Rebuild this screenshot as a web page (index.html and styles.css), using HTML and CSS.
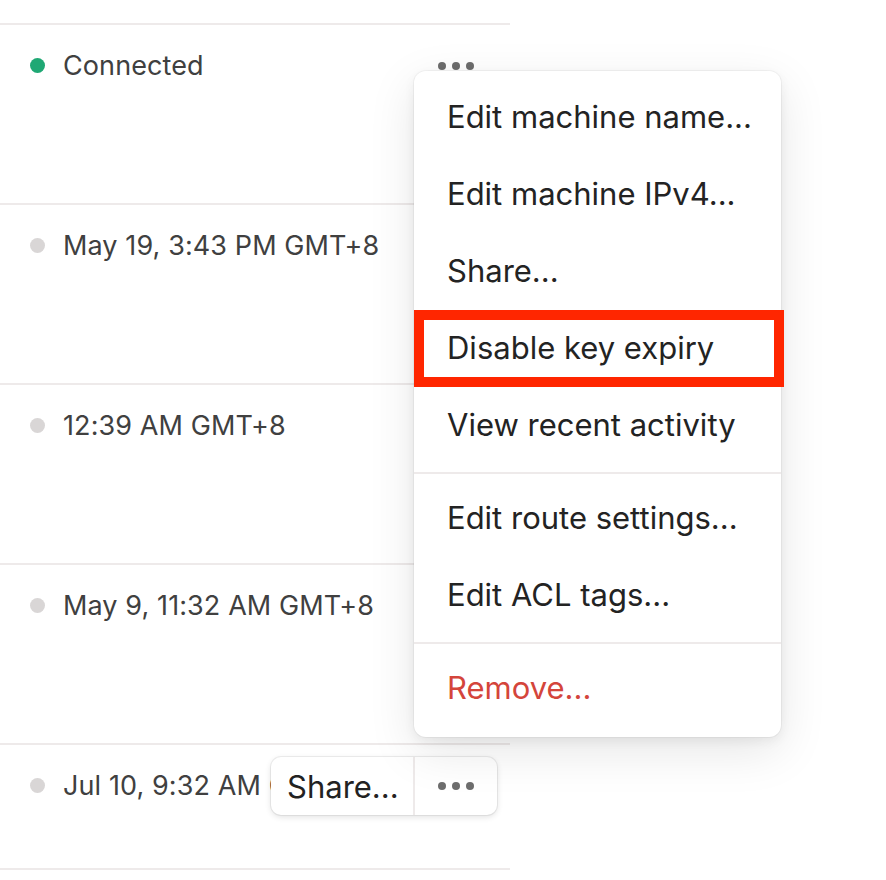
FILE: index.html
```html
<!DOCTYPE html>
<html lang="en">
<head>
<meta charset="utf-8">
<title>Machines</title>
<link rel="stylesheet" href="styles.css">
</head>
<body>
  <div class="list">
    <div class="row">
      <div class="status"><span class="dot dot-on"></span><span class="status-text">Connected</span></div>
      <div class="actions plain">
        <button class="more" aria-label="More"><span></span><span></span><span></span></button>
      </div>
    </div>
    <div class="row">
      <div class="status"><span class="dot"></span><span class="status-text">May 19, 3:43 PM GMT+8</span></div>
    </div>
    <div class="row">
      <div class="status"><span class="dot"></span><span class="status-text">12:39 AM GMT+8</span></div>
    </div>
    <div class="row">
      <div class="status"><span class="dot"></span><span class="status-text">May 9, 11:32 AM GMT+8</span></div>
    </div>
    <div class="row row-last">
      <div class="status"><span class="dot"></span><span class="status-text">Jul 10, 9:32 AM GMT+8</span></div>
      <div class="actions group">
        <button class="share">Share...</button>
        <button class="more" aria-label="More"><span></span><span></span><span></span></button>
      </div>
    </div>
  </div>

  <div class="menu" role="menu">
    <div class="menu-item">Edit machine name...</div>
    <div class="menu-item">Edit machine IPv4...</div>
    <div class="menu-item">Share...</div>
    <div class="menu-item highlighted">Disable key expiry<span class="callout"></span></div>
    <div class="menu-item">View recent activity</div>
    <div class="menu-sep"></div>
    <div class="menu-item">Edit route settings...</div>
    <div class="menu-item">Edit ACL tags...</div>
    <div class="menu-sep"></div>
    <div class="menu-item danger">Remove...</div>
  </div>
</body>
</html>
```

FILE: styles.css
```css
html, body {
  margin: 0;
  padding: 0;
  background: #ffffff;
}

body {
  font-family: Inter, "Noto Sans", "Liberation Sans", sans-serif;
  width: 886px;
  height: 880px;
  overflow: hidden;
  position: relative;
}

.list {
  width: 510px;
  margin-top: 23px;
  border-top: 2px solid #eeeaea;
}

.row {
  position: relative;
  height: 158px;
  padding-top: 20px;
  border-bottom: 2px solid #eeeaea;
  box-sizing: content-box;
}

.row-last {
  height: 103px;
}

.status {
  display: flex;
  align-items: center;
  height: 40px;
  padding-left: 30px;
}

.dot {
  width: 15px;
  height: 15px;
  border-radius: 50%;
  background: #d9d6d6;
  flex: none;
}

.dot-on {
  background: #1fa874;
}

.status-text {
  margin-left: 18px;
  font-size: 27px;
  color: #404040;
  white-space: nowrap;
  letter-spacing: 0.1px;
}

.actions {
  position: absolute;
  right: 13px;
  top: 12px;
  height: 58px;
  display: flex;
}

.actions button {
  border: 0;
  background: transparent;
  padding: 0;
  margin: 0;
  font-family: inherit;
  height: 58px;
}

.group {
  background: #ffffff;
  border-radius: 10px;
  box-shadow: 0 0 0 1px rgba(0, 0, 0, 0.06), 0 2px 6px rgba(0, 0, 0, 0.12);
}

.actions .share {
  width: 144px;
  padding-left: 16px;
  text-align: left;
  font-size: 31px;
  color: #222222;
  border-right: 2px solid #eeeaea;
  box-sizing: border-box;
}

.more {
  width: 82px;
  display: flex;
  align-items: center;
  justify-content: center;
  gap: 6px;
}

.more span {
  width: 8px;
  height: 8px;
  border-radius: 50%;
  background: #6d6d6d;
}

.menu {
  position: absolute;
  left: 414px;
  top: 71px;
  width: 367px;
  padding: 9px 0;
  background: #ffffff;
  border-radius: 12px;
  box-shadow: 0 0 0 1px rgba(0, 0, 0, 0.04), 0 4px 12px rgba(0, 0, 0, 0.06), 0 14px 48px rgba(0, 0, 0, 0.1);
}

.menu-item {
  position: relative;
  height: 77px;
  line-height: 73px;
  padding-left: 33px;
  font-size: 31px;
  color: #232323;
  white-space: nowrap;
  letter-spacing: 0;
}

.menu-item.danger {
  color: #d4453b;
}

.menu-sep {
  height: 2px;
  margin: 7px 0;
  background: #eeeaea;
}

.callout {
  position: absolute;
  left: 0;
  right: -3px;
  top: -1px;
  bottom: 1px;
  border: 10px solid #ff2600;
}
```
